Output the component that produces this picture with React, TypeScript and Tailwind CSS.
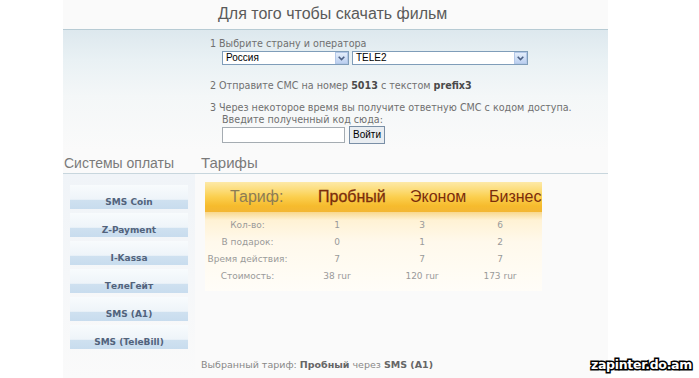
import React from "react";

const payments = ["SMS Coin", "Z-Payment", "I-Kassa", "ТелеГейт", "SMS (A1)", "SMS (TeleBill)"];

const rows = [
  ["Кол-во:", "1", "3", "6"],
  ["В подарок:", "0", "1", "2"],
  ["Время действия:", "7", "7", "7"],
  ["Стоимость:", "38 rur", "120 rur", "173 rur"],
];

const FakeSelect: React.FC<{ value: string; width: string }> = ({ value, width }) => (
  <div className={`flex h-[14px] border border-[#7f9db9] bg-white ${width}`}>
    <span className="flex-1 pl-[3px] font-['Liberation_Sans',sans-serif] text-[10px] leading-[12px] text-black">
      {value}
    </span>
    <span className="flex h-[12px] w-[13px] items-center justify-center border border-[#b4c8e8] bg-gradient-to-b from-[#e4eefb] to-[#bcd0f0]">
      <svg width="7" height="5" viewBox="0 0 7 5">
        <path d="M0.7 0.7 L3.5 3.6 L6.3 0.7" stroke="#4d6185" strokeWidth="1.6" fill="none" />
      </svg>
    </span>
  </div>
);

const App: React.FC = () => {
  return (
    <div className="relative h-[378px] w-[699px] overflow-hidden bg-white font-['DejaVu_Sans',sans-serif]">
      <div className="ml-[63px] flex h-full w-[545px] flex-col bg-[#fafafa]">
        {/* заголовок */}
        <div className="h-[29px] pl-[155px] pt-[3px] font-['Liberation_Sans',sans-serif] text-[16px] leading-[22px] text-[#5a5a5a]">
          Для того чтобы скачать фильм
        </div>

        {/* шаги */}
        <div className="h-[121px] border-t border-[#b7cbd4] bg-[linear-gradient(to_bottom,#dde8ee_0%,#e9f1f4_25%,#f4f7f8_55%,#fafafa_100%)] pl-[147px] pt-[8px] text-[9.6px] leading-[12px] text-[#707070]">
          <div className="flex">
            <span className="w-[9px]">1</span>
            <span>Выбрите страну и оператора</span>
          </div>
          <div className="ml-[12px] mt-[1px] flex gap-[3px]">
            <FakeSelect value="Россия" width="w-[127px]" />
            <FakeSelect value="TELE2" width="w-[176px]" />
          </div>
          <div className="mt-[15px] flex">
            <span className="w-[9px]">2</span>
            <span>
              Отправите СМС на номер <b className="text-[#4a4a4a]">5013</b> с текстом{" "}
              <b className="text-[#4a4a4a]">prefix3</b>
            </span>
          </div>
          <div className="mt-[10px] flex">
            <span className="w-[9px]">3</span>
            <span>Через некоторое время вы получите ответную СМС с кодом доступа.</span>
          </div>
          <div className="ml-[12px]">Введите полученный код сюда:</div>
          <div className="ml-[12px] flex items-start gap-[4px]">
            <div className="mt-[1px] h-[16px] w-[123px] border border-[#a5acb2] bg-white" />
            <button className="h-[18px] border border-[#7a8fa6] bg-[#e9edf1] px-[3px] font-['Liberation_Sans',sans-serif] text-[10px] leading-[14px] text-black">
              Войти
            </button>
          </div>
        </div>

        {/* нижняя часть */}
        <div className="flex h-[24px] border-b border-[#c8d6dd] pt-[4px] font-['Liberation_Sans',sans-serif] text-[14px] leading-[18px] text-[#7a7a7a]">
          <div className="w-[132px] pl-[1px]">Системы оплаты</div>
          <div className="pl-[6px] text-[15px]">Тарифы</div>
        </div>

        <div className="flex flex-1">
          <div className="flex w-[132px] flex-col gap-[4px] bg-gradient-to-b from-[#f0f4f8] to-[#fafafa] pl-[7px] pt-[11px]">
            {payments.map((p) => (
              <div
                key={p}
                className="flex h-[24px] w-[118px] items-end justify-center bg-[linear-gradient(to_bottom,#f8fbfd_0%,#eef4f9_60%,#cfe1f0_62%,#c8dcee_100%)] pb-[1px] text-[9px] font-bold leading-[12px] text-[#52637c]"
              >
                {p}
              </div>
            ))}
          </div>

          <div className="flex flex-1 flex-col">
            <div className="ml-[10px] mt-[8px] w-[337px]">
              <div className="flex h-[30px] bg-[linear-gradient(to_bottom,#fde9a8_0%,#fcdb74_30%,#fbcf4e_50%,#f6bb2d_80%,#f3b634_100%)] font-['Liberation_Sans',sans-serif] text-[16px] leading-[30px] text-[#7b2d0c]">
                <span className="w-[113px] pl-[25px] text-[#8c7c55]">Тариф:</span>
                <span className="w-[92px] [-webkit-text-stroke:0.3px_#7b2d0c]">Пробный</span>
                <span className="w-[79px]">Эконом</span>
                <span className="flex-1 whitespace-nowrap">Бизнес</span>
              </div>
              <div className="bg-[linear-gradient(to_bottom,#f8d88e_0px,#fff2d4_8px,#fff9ec_30px,#fffdf8_100%)] pb-[6px] pt-[5px] text-[9px] leading-[17px] text-[#9a9a9a]">
                {rows.map((r) => (
                  <div key={r[0]} className="grid grid-cols-[85px_94px_76px_80px] text-center">
                    {r.map((c, i) => (
                      <span key={i} className="whitespace-nowrap">
                        {c}
                      </span>
                    ))}
                  </div>
                ))}
              </div>
            </div>

            <div className="mt-auto pb-[7px] pl-[6px] text-[9.5px] leading-[12px] text-[#888]">
              Выбранный тариф: <b className="text-[#666]">Пробный</b> через{" "}
              <b className="text-[#666]">SMS (A1)</b>
            </div>
          </div>
        </div>
      </div>

      <div className="absolute left-[591px] top-[357px] font-['DejaVu_Sans',sans-serif] text-[12.5px] font-bold leading-[16px] tracking-[-0.3px] text-white [-webkit-text-stroke:3px_#000] [paint-order:stroke_fill]">
        zapinter.do.am
      </div>
    </div>
  );
};

export default App;
